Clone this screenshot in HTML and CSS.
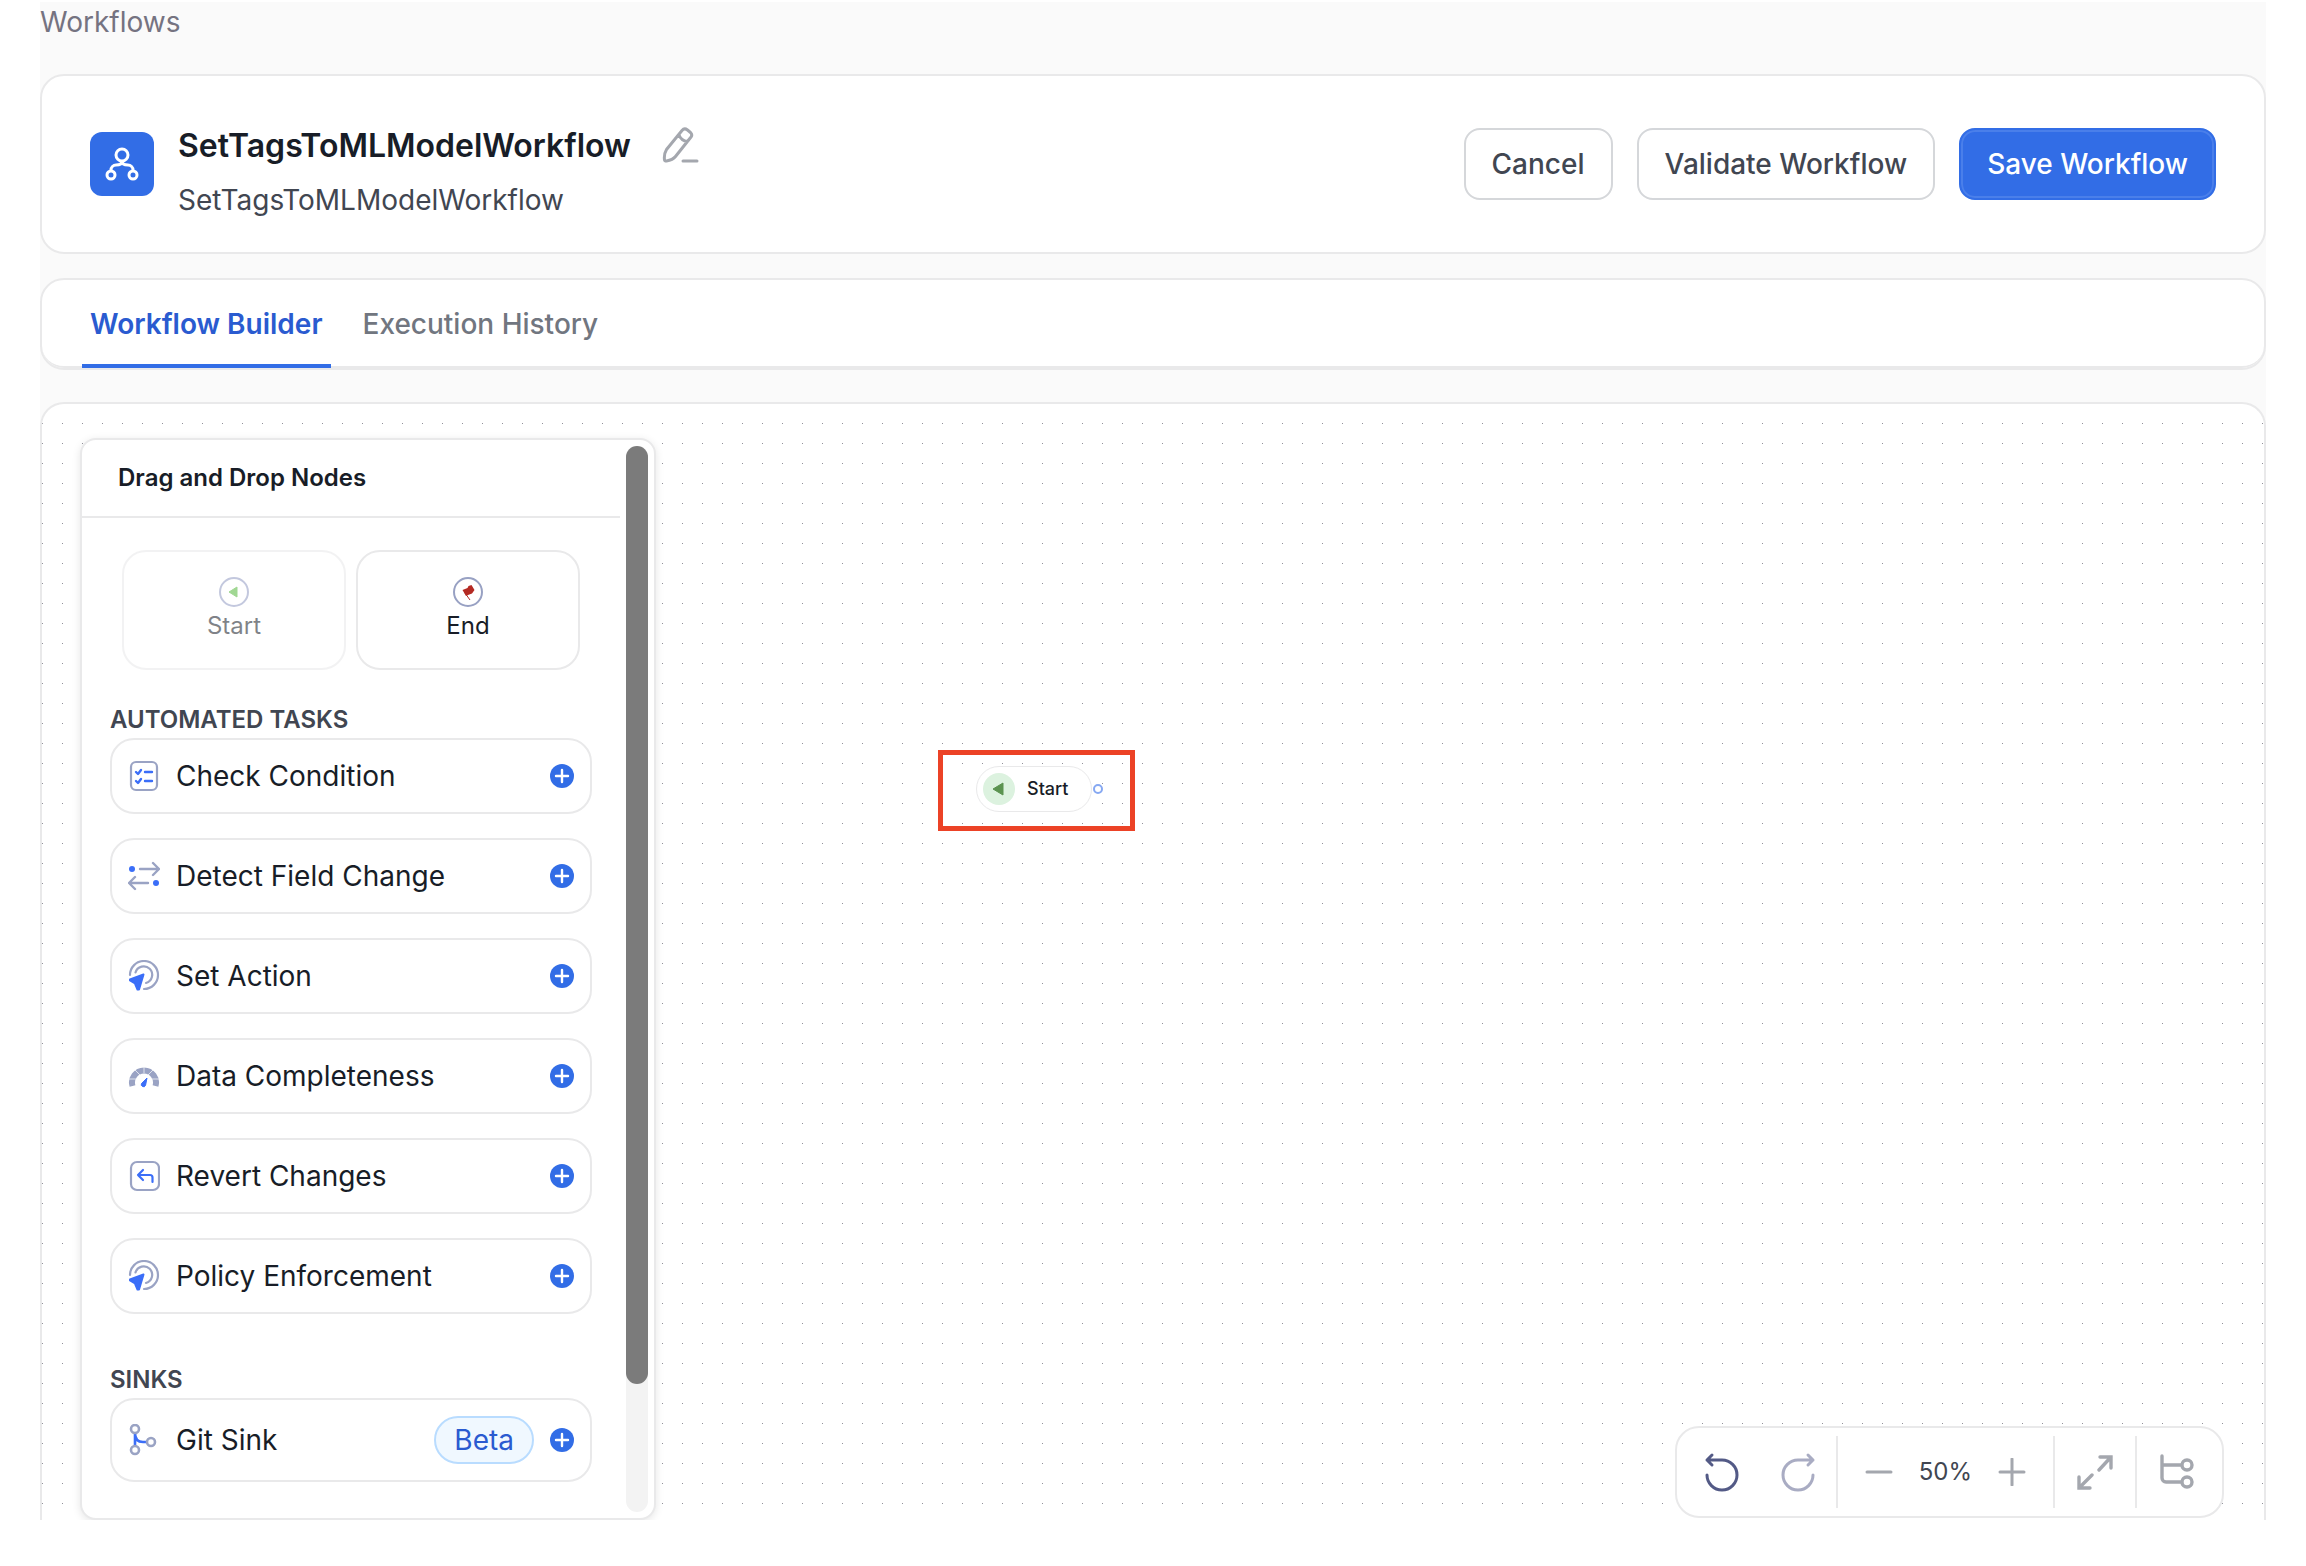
FILE: index.html
```html
<!DOCTYPE html>
<html lang="en">
<head>
  <meta charset="UTF-8">
  <meta name="viewport" content="width=device-width, initial-scale=1">
  <title>SetTagsToMLModelWorkflow - Workflows</title>
  <link rel="stylesheet" href="styles.css">
</head>
<body>
  <!-- shared icons -->
  <svg class="defs" aria-hidden="true">
    <symbol id="plus" viewBox="0 0 24 24">
      <circle cx="12" cy="12" r="12" fill="#326de6"/>
      <path d="M12 6v12M6 12h12" stroke="#fff" stroke-width="2.4" stroke-linecap="round"/>
    </symbol>
    <symbol id="action" viewBox="0 0 32 32">
      <g fill="none" stroke="#9aa3c4" stroke-width="2.2" stroke-linecap="round">
        <path d="M2 15a14 14 0 1 1 14 14"/>
        <path d="M7.5 12.5a8.500 8.500 0 1 1 10.5 10.5"/>
      </g>
      <path d="M15.500 14.500L2 19.500v1l5 3 2.500 6h1.500z" fill="#3b6ef8" stroke="#3b6ef8" stroke-width="2" stroke-linejoin="round"/>
    </symbol>
  </svg>

  <main class="page">
    <nav class="breadcrumb"><a href="#">Workflows</a></nav>

    <header class="card header">
      <div class="logo">
        <svg width="64" height="64" viewBox="0 0 64 64" fill="none" stroke="#fff" stroke-width="3">
          <circle cx="32" cy="23" r="6"/>
          <circle cx="21" cy="43" r="4"/>
          <circle cx="43" cy="43" r="4"/>
          <path d="M21 39v-1a5 5 0 0 1 5-5c3 0 6-1 6-4 0 3 3 4 6 4a5 5 0 0 1 5 5v1"/>
        </svg>
      </div>
      <div class="titles">
        <div class="title-row">
          <h1>SetTagsToMLModelWorkflow</h1>
          <button class="icon-btn" aria-label="Edit name">
            <svg width="40" height="40" viewBox="0 0 40 40" fill="none" stroke="#a4a7ae" stroke-width="3" stroke-linecap="round" stroke-linejoin="round">
              <path d="M21 4.5 5.5 23.5C4 26 3 30 3.5 34c.2 1 1 1.2 2 1 4-.7 7-2 9-4.5L30 11c1.5-2 1-3-.5-4.5L26.5 4c-2-1.5-4-1.3-5.5.5zM18 9c1.500 4 4.500 6 8.500 6.500M22 35h14"/>
            </svg>
          </button>
        </div>
        <p>SetTagsToMLModelWorkflow</p>
      </div>
      <div class="actions">
        <button class="btn">Cancel</button>
        <button class="btn">Validate Workflow</button>
        <button class="btn primary">Save Workflow</button>
      </div>
    </header>

    <div class="card tabs-card">
      <nav class="tabs">
        <a class="tab active" href="#">Workflow Builder</a>
        <a class="tab" href="#">Execution History</a>
      </nav>
    </div>

    <section class="canvas">
      <svg class="dots" aria-hidden="true">
        <pattern id="grid" width="20" height="20" patternUnits="userSpaceOnUse">
          <rect x="0" y="19" width="1" height="1" fill="#91919a"/>
        </pattern>
        <rect width="100%" height="100%" fill="url(#grid)"/>
      </svg>

      <div class="highlight"></div>
      <div class="node">
        <span class="node-icon">
          <svg width="12" height="14" viewBox="0 0 12 14"><path d="M11 1v12L1 7z" fill="#5b9350" stroke="#5b9350" stroke-linejoin="round"/></svg>
        </span>
        Start
        <span class="handle"></span>
      </div>

      <aside class="panel">
        <div class="panel-content">
          <h2>Drag and Drop Nodes</h2>
          <div class="ends">
            <div class="end-card disabled">
              <svg width="30" height="30" viewBox="0 0 30 30">
                <circle cx="15" cy="15" r="14" fill="none" stroke="#939cc4" stroke-width="2"/>
                <path d="M18 10v10L10 15z" fill="#55b83c" stroke="#55b83c" stroke-linejoin="round"/>
              </svg>
              <span>Start</span>
            </div>
            <div class="end-card">
              <svg width="30" height="30" viewBox="0 0 30 30">
                <circle cx="15" cy="15" r="14" fill="none" stroke="#98a1c3" stroke-width="2"/>
                <path d="M9.500 13l5-2 1-2 3-1 3 5-2.500 3.500-4 1.500-2 1z" fill="#b42a23"/>
                <path d="M12 16l5 7" stroke="#b42a23" stroke-width="1"/>
              </svg>
              <span>End</span>
            </div>
          </div>

          <h3>AUTOMATED TASKS</h3>
          <div class="items">
            <div class="item">
              <svg width="32" height="32" viewBox="0 0 32 32" fill="none" stroke-linecap="round" stroke-linejoin="round">
                <rect x="3" y="2" width="26" height="28" rx="5" stroke="#9aa3c4" stroke-width="2.2"/>
                <path d="M8 12l2 2 3-4M8 21l2 2 3-4M17 12h7M17 21h7" stroke="#3b6ef8" stroke-width="2.4"/>
              </svg>
              <span>Check Condition</span>
              <button class="icon-btn" aria-label="Add Check Condition"><svg width="24" height="24"><use href="#plus"/></svg></button>
            </div>
            <div class="item">
              <svg width="32" height="32" viewBox="0 0 32 32" fill="none" stroke-linecap="round" stroke-linejoin="round">
                <path d="M12 9h19M25 3l6 6-6 6M20 23H1M7 17l-6 6 6 6" stroke="#9aa3c4" stroke-width="2.4"/>
                <circle cx="4" cy="9" r="3" fill="#3b6ef8"/>
                <circle cx="28" cy="23" r="3" fill="#3b6ef8"/>
              </svg>
              <span>Detect Field Change</span>
              <button class="icon-btn" aria-label="Add Detect Field Change"><svg width="24" height="24"><use href="#plus"/></svg></button>
            </div>
            <div class="item">
              <svg width="32" height="32"><use href="#action"/></svg>
              <span>Set Action</span>
              <button class="icon-btn" aria-label="Add Set Action"><svg width="24" height="24"><use href="#plus"/></svg></button>
            </div>
            <div class="item">
              <svg width="32" height="32" viewBox="0 0 32 32" fill="none">
                <path d="M4.5 26A12 12 0 1 1 27.5 26" stroke="#9aa3c4" stroke-width="6"/>
                <path d="M16 5v8M0 19h8M32 19h-8M6 9l6 6M26 9l-6 6" stroke="#fff" stroke-width=".7"/>
                <path d="M19 18l-1.500 7.500a2 2 0 1 1-4-2z" fill="#3b6ef8" stroke="#3b6ef8" stroke-linejoin="round"/>
              </svg>
              <span>Data Completeness</span>
              <button class="icon-btn" aria-label="Add Data Completeness"><svg width="24" height="24"><use href="#plus"/></svg></button>
            </div>
            <div class="item">
              <svg width="32" height="32" viewBox="0 0 32 32" fill="none" stroke-width="2.2" stroke-linecap="round" stroke-linejoin="round">
                <rect x="3" y="2" width="28" height="28" rx="6" stroke="#9aa3c4"/>
                <path d="M10 15h12a2.500 2.500 0 0 1 2.500 2.500V22M15 10l-5 5 5 5" stroke="#3b6ef8"/>
              </svg>
              <span>Revert Changes</span>
              <button class="icon-btn" aria-label="Add Revert Changes"><svg width="24" height="24"><use href="#plus"/></svg></button>
            </div>
            <div class="item">
              <svg width="32" height="32"><use href="#action"/></svg>
              <span>Policy Enforcement</span>
              <button class="icon-btn" aria-label="Add Policy Enforcement"><svg width="24" height="24"><use href="#plus"/></svg></button>
            </div>
          </div>

          <h3 class="sinks">SINKS</h3>
          <div class="items">
            <div class="item tall">
              <svg width="32" height="32" viewBox="0 0 32 32" fill="none" stroke-width="2.6">
                <path d="M7 9v13M7 9c0 6 3 9 8 9h4" stroke="#3b6ef8"/>
                <g stroke="#9aa3c4">
                  <circle cx="7" cy="5" r="4"/>
                  <circle cx="7" cy="26" r="4"/>
                  <circle cx="23" cy="18" r="4"/>
                </g>
              </svg>
              <span>Git Sink</span>
              <span class="badge">Beta</span>
              <button class="icon-btn" aria-label="Add Git Sink"><svg width="24" height="24"><use href="#plus"/></svg></button>
            </div>
          </div>
        </div>
        <div class="scrollbar"><div class="thumb"></div></div>
      </aside>

      <div class="toolbar">
        <div class="group history">
          <button class="icon-btn" aria-label="Undo">
            <svg width="36" height="40" viewBox="0 0 36 40" fill="none" stroke="#535a86" stroke-width="3" stroke-linecap="round" stroke-linejoin="round"><path d="M3 23a15 15 0 1 0 15-15H3M8 3L3 8l5 5"/></svg>
          </button>
          <button class="icon-btn" aria-label="Redo">
            <svg width="36" height="40" viewBox="0 0 36 40" fill="none" stroke="#a9acc3" stroke-width="3" stroke-linecap="round" stroke-linejoin="round"><path d="M33 23a15 15 0 1 1-15-15h15M28 3l5 5-5 5"/></svg>
          </button>
        </div>
        <div class="group zoom">
          <button class="icon-btn" aria-label="Zoom out">
            <svg width="28" height="28" viewBox="0 0 28 28" stroke="#a4a7ae" stroke-width="3" stroke-linecap="round"><path d="M2 14h24"/></svg>
          </button>
          <span>50%</span>
          <button class="icon-btn" aria-label="Zoom in">
            <svg width="28" height="28" viewBox="0 0 28 28" stroke="#a4a7ae" stroke-width="3" stroke-linecap="round"><path d="M2 14h24M14 1v26"/></svg>
          </button>
        </div>
        <div class="group">
          <button class="icon-btn" aria-label="Fit view">
            <svg width="36" height="40" viewBox="0 0 36 40" fill="none" stroke="#a4a7ae" stroke-width="3.4" stroke-linecap="round"><path d="M23 5h11v11M34 5L22 18M2 25v11h11M2 36l13-13"/></svg>
          </button>
        </div>
        <div class="group layout">
          <button class="icon-btn" aria-label="Arrange nodes">
            <svg width="36" height="40" viewBox="0 0 36 40" fill="none" stroke="#a4a7ae" stroke-width="3.4" stroke-linecap="round"><path d="M3 4v22a4 4 0 0 0 4 4h15M3 13h19"/><circle cx="28" cy="13" r="5"/><circle cx="28" cy="30" r="5"/></svg>
          </button>
        </div>
      </div>
    </section>
  </main>
</body>
</html>
```

FILE: styles.css
```css
* { margin:0; padding:0; box-sizing:border-box; }
body { font-family:Inter,sans-serif; font-size:28px; line-height:40px; background:#fff; color:#181d27;
       height:100vh; display:flex; flex-direction:column; padding:2px 40px 46px; }
a { color:inherit; text-decoration:none; }
button { font:inherit; cursor:pointer; }
svg { display:block; flex:none; }
.defs { position:absolute; width:0; height:0; }
.icon-btn { background:none; border:0; }

.page { flex:1; min-height:0; display:flex; flex-direction:column; background:#fafafa; }
.breadcrumb { color:#757381; margin-bottom:32px; }
.card { background:#fff; border:2px solid #e9e9ea; border-radius:24px; }

.header { display:flex; align-items:center; gap:24px; min-height:180px; padding:0 48px; margin-bottom:24px; }
.logo { background:#326de6; border-radius:12px; }
.titles { flex:1; padding-top:14px; }
.title-row { display:flex; align-items:center; gap:30px; height:48px; margin-bottom:10px; }
.titles h1 { font-size:32px; font-weight:600; }
.titles p { color:#414651; }
.actions { display:flex; gap:24px; }
.btn { height:72px; padding:0 26px; font-weight:500; color:#414651; background:#fff;
       border:2px solid #d5d7da; border-radius:16px; }
.btn.primary { background:#326de6; color:#fff; border-color:#326de6; box-shadow:inset 0 0 0 2px #4a7fea; }

.tabs-card { margin-bottom:32px; }
.tabs { display:flex; gap:24px; height:88px; padding:0 40px; border-bottom:2px solid #e9e9ea;
        border-radius:0 0 22px 22px; }
.tab { height:88px; padding:24px 8px; font-weight:500; color:#717680; border-bottom:4px solid transparent; }
.tab.active { color:#2a5bd0; font-weight:600; border-color:#326de6; }

.canvas { flex:1; min-height:0; position:relative; overflow:hidden; background:#fff;
          border:2px solid #e9e9ea; border-bottom:0; border-radius:24px 24px 0 0; }
.dots { position:absolute; inset:0; width:100%; height:100%; }

/* nodes on the canvas */
.highlight { position:absolute; left:896px; top:346px; width:197px; height:81px; border:5px solid #ec4226; }
.node { position:absolute; left:934px; top:362px; width:116px; height:46px; padding-left:6px;
        display:flex; align-items:center; gap:12px; font-size:18px; font-weight:500;
        background:#fff; border:1px solid #e9e9ea; border-radius:23px; }
.node-icon { width:32px; height:32px; padding-right:3px; border-radius:50%; background:#dcf2df;
             display:flex; align-items:center; justify-content:center; }
.handle { position:absolute; right:-12px; top:17px; width:10px; height:10px; border:2px solid #86a8f2;
          border-radius:50%; background:#fff; }

.panel { position:absolute; left:38px; top:34px; bottom:0; width:576px; display:flex; overflow:hidden;
         background:#fff; border:2px solid #e9e9ea; border-radius:16px; box-shadow:0 2px 8px rgba(0,0,0,.1); }
.panel-content { flex:1; }
.panel h2 { font-size:24px; font-weight:600; height:78px; padding:18px 36px; border-bottom:2px solid #e9e9ea; }
.ends { display:flex; gap:10px; padding:32px 40px 34px; }
.end-card { flex:1; height:120px; padding-top:25px; display:flex; flex-direction:column; align-items:center;
            font-size:24px; line-height:38px; border:2px solid #e9e9ea; border-radius:24px; }
.disabled { opacity:.55; }
.panel h3 { font-size:24px; font-weight:600; line-height:32px; color:#414651; padding-left:28px; margin-bottom:2px; }
.panel h3.sinks { margin-top:50px; }
.items { display:flex; flex-direction:column; gap:24px; padding:0 28px; }
.item { display:flex; align-items:center; gap:16px; height:76px; padding:0 16px;
        border:2px solid #e9e9ea; border-radius:24px; }
.item.tall { height:84px; }
.item span:first-of-type { flex:1; }
.badge { height:48px; padding:0 18px; line-height:44px; color:#2a5bd0; background:#f0f8ff;
         border:2px solid #b9dcff; border-radius:24px; }
.scrollbar { width:22px; margin:6px; border-radius:11px; background:#f3f3f3; }
.thumb { height:88%; border-radius:11px; background:#7b7b7b; }

.toolbar { position:absolute; right:40px; bottom:2px; height:92px; padding:8px 0; display:flex;
           background:#fff; border:2px solid #e9e9ea; border-radius:24px; }
.group { display:flex; align-items:center; padding:0 22px; }
.group + .group { border-left:2px solid #e9e9ea; }
.history { gap:40px; padding:0 20px 0 27px; }
.zoom { gap:26px; padding:0 27px; font-size:24px; line-height:32px; color:#414651; }
.layout { padding-right:27px; }
```
